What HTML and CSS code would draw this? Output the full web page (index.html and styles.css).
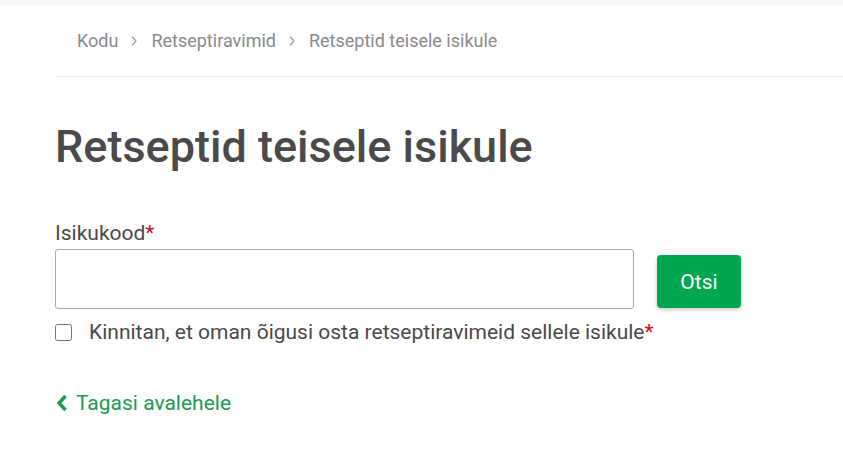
FILE: index.html
```html
<!DOCTYPE html>
<html lang="et">
<head>
    <meta charset="UTF-8">
    <meta name="viewport" content="width=device-width, initial-scale=1.0">
    <title>Retseptid teisele isikule</title>
    <link rel="stylesheet" href="styles.css">
</head>
<body>
    <div class="topbar"></div>
    <div class="page">
        <nav class="breadcrumb">
            <a href="#">Kodu</a>
            <svg class="sep" width="8" height="12" viewBox="0 0 8 12"><path d="M2 1.5 L6 6 L2 10.5" fill="none" stroke="#9a9a9a" stroke-width="1.2"/></svg>
            <a href="#">Retseptiravimid</a>
            <svg class="sep" width="8" height="12" viewBox="0 0 8 12"><path d="M2 1.5 L6 6 L2 10.5" fill="none" stroke="#9a9a9a" stroke-width="1.2"/></svg>
            <span>Retseptid teisele isikule</span>
        </nav>
        <h1>Retseptid teisele isikule</h1>
        <form class="form">
            <label class="label" for="isikukood">Isikukood<span class="req">*</span></label>
            <div class="row">
                <input id="isikukood" type="text" class="input">
                <button type="button" class="btn">Otsi</button>
            </div>
            <label class="check">
                <input type="checkbox">
                <span>Kinnitan, et oman õigusi osta retseptiravimeid sellele isikule<span class="req">*</span></span>
            </label>
        </form>
        <a href="#" class="back">
            <svg width="13" height="18" viewBox="0 0 13 18"><path d="M10.5 2 L4 9 L10.5 16" fill="none" stroke="#1a9b4f" stroke-width="3.4"/></svg>
            Tagasi avalehele
        </a>
    </div>
</body>
</html>
```

FILE: styles.css
```css
* {
    box-sizing: border-box;
}
body {
    margin: 0;
    padding: 0;
    background: #fff;
    font-family: Roboto, 'Liberation Sans', sans-serif;
    color: #4a4a4a;
}
.topbar {
    height: 5px;
    background: #f7f7f7;
}
.page {
    padding-left: 55px;
}
.breadcrumb {
    display: flex;
    align-items: center;
    height: 72px;
    padding-left: 22px;
    border-bottom: 1px solid #e6e6e6;
    font-size: 18px;
    color: #8a8a8a;
}
.breadcrumb a {
    color: #8a8a8a;
    text-decoration: none;
}
.breadcrumb .sep {
    margin: 0 13px 0 12px;
}
h1 {
    margin: 40px 0 0;
    font-size: 45px;
    font-weight: 500;
    line-height: 60px;
    color: #4a4a4a;
}
.form {
    margin-top: 44px;
}
.label {
    display: block;
    font-size: 21px;
    line-height: 24px;
    margin-bottom: 4px;
}
.req {
    color: #e30613;
}
.row {
    display: flex;
    align-items: flex-start;
    gap: 23px;
}
.input {
    width: 579px;
    height: 60px;
    border: 1px solid #a9a9a9;
    border-radius: 3px;
    font-size: 18px;
    padding: 0 12px;
}
.btn {
    width: 84px;
    height: 53px;
    margin-top: 6px;
    background: #00a650;
    color: #fff;
    border: none;
    border-radius: 4px;
    font-family: inherit;
    font-size: 21px;
    box-shadow: 0 2px 4px rgba(0, 0, 0, 0.2);
}
.check {
    display: flex;
    align-items: center;
    gap: 17px;
    margin-top: 11px;
    font-size: 21px;
    line-height: 24px;
}
.check input {
    width: 17px;
    height: 17px;
    margin: 0;
}
.back {
    display: inline-flex;
    align-items: center;
    gap: 8px;
    margin-top: 47px;
    color: #1a9b4f;
    text-decoration: none;
    font-size: 21px;
}
```
